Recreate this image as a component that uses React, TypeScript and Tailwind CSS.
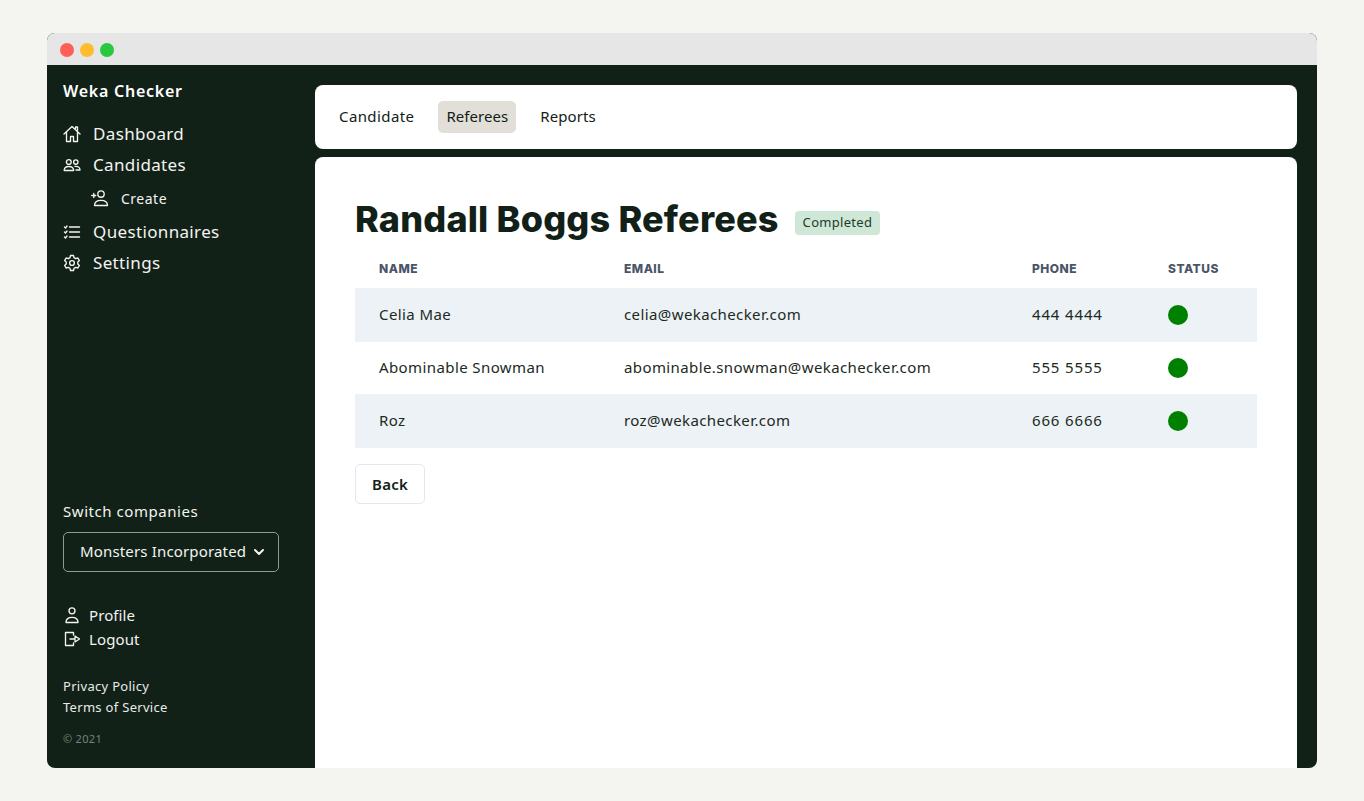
import React from "react";

const body = { fontFamily: '"Noto Sans", sans-serif' };

const Ico = ({ children, s = 18 }: { children: React.ReactNode; s?: number }) => (
  <svg width={s} height={s} viewBox="0 0 18 18" fill="none" stroke="currentColor" strokeWidth={1.35} strokeLinecap="round" strokeLinejoin="round" className="shrink-0">
    {children}
  </svg>
);

const Home = () => (
  <Ico><path d="M1 9 9 1.500 17 9M3.500 7v9.500h4v-5h3v5h4V7M12.500 3.500V2h2v3.500" /></Ico>
);
const Users = () => (
  <Ico><circle cx="5.800" cy="6" r="2.400" /><circle cx="12.800" cy="6" r="2.200" /><path d="M1.200 14.500c0-3 2-4 4.600-4s4.800 1 4.800 4zM12 10.400c2.800-.3 5 .8 5 3.600h-4" /></Ico>
);
const UserPlus = () => (
  <Ico><circle cx="10" cy="5" r="3.200" /><path d="M3.500 16.500c0-3.800 2.600-5.200 6.500-5.200s6.500 1.400 6.500 5.200zM.8 6.500h4M2.800 4.500v4" /></Ico>
);
const ListCheck = () => (
  <Ico><path d="M6.500 4h10M6.500 9h10M6.500 14h10M1.500 4l1 1 1.500-2M1.500 9l1 1 1.500-2M1.500 14l1 1 1.500-2" /></Ico>
);
const Gear = () => (
  <Ico><circle cx="9" cy="9" r="2.400" /><path d="M7.500 1.500h3l.5 2.200 1.700 1 2.200-.7 1.500 2.600-1.600 1.500v1.800l1.600 1.500-1.500 2.600-2.200-.7-1.700 1-.5 2.200h-3l-.5-2.200-1.700-1-2.200.7-1.500-2.600 1.600-1.500V8.100L1.600 6.600 3.100 4l2.200.7 1.700-1z" /></Ico>
);
const Person = () => (
  <Ico s={18}><circle cx="9" cy="4.800" r="3" /><path d="M3 16.500c0-3.800 2.400-5.200 6-5.200s6 1.400 6 5.200z" /></Ico>
);
const Logout = () => (
  <Ico s={18}><path d="M10.500 5V2.500H2.500v13h8V13M7 9h5V6l4.500 3-4.500 3V9" /></Ico>
);

const Nav = ({ icon, label }: { icon: React.ReactNode; label: string }) => (
  <div className="flex items-center gap-[12px] h-[31px] text-[17px] tracking-[0.35px] text-[#f3f4f0]">
    {icon}
    <span>{label}</span>
  </div>
);

const rows = [
  ["Celia Mae", "celia@wekachecker.com", "444 4444"],
  ["Abominable Snowman", "abominable.snowman@wekachecker.com", "555 5555"],
  ["Roz", "roz@wekachecker.com", "666 6666"],
];

export default function App() {
  return (
    <div className="w-[1364px] h-[801px] bg-[#f4f5f0] pt-[33px] pl-[47px] overflow-hidden" style={body}>
      <div className="w-[1270px] h-[735px] rounded-[8px] overflow-hidden flex flex-col bg-[#122118]">
        <div className="h-[32px] bg-[#e6e6e6] flex items-center gap-[6px] pl-[13px] pt-[2px] shrink-0">
          <span className="w-[14px] h-[14px] rounded-full bg-[#ff5f57]" />
          <span className="w-[14px] h-[14px] rounded-full bg-[#febc2e]" />
          <span className="w-[14px] h-[14px] rounded-full bg-[#28c840]" />
        </div>
        <div className="flex flex-1 min-h-0">
          <aside className="w-[268px] shrink-0 pl-[16px] pr-[36px] pt-[15px] pb-[21px] flex flex-col text-white">
            <div className="text-[16px] font-semibold tracking-[0.75px] leading-[22px] mb-[16px]">Weka Checker</div>
            <Nav icon={<Home />} label="Dashboard" />
            <Nav icon={<Users />} label="Candidates" />
            <div className="flex items-center gap-[12px] h-[36px] pl-[28px] text-[14px] tracking-[0.5px] text-[#f3f4f0]">
              <UserPlus />
              <span>Create</span>
            </div>
            <Nav icon={<ListCheck />} label="Questionnaires" />
            <Nav icon={<Gear />} label="Settings" />
            <div className="mt-auto text-[15px] tracking-[0.55px] leading-[20px] text-[#f3f4f0]">Switch companies</div>
            <div className="mt-[11px] w-[216px] h-[40px] border border-[#8f9a94] rounded-[5px] flex items-center pl-[16px] pb-[1px] gap-[7px] text-[15px] tracking-[0.16px] text-[#f3f4f0]">
              <span className="whitespace-nowrap">Monsters Incorporated</span>
              <svg width="12" height="12" viewBox="0 0 12 12" fill="none" stroke="currentColor" strokeWidth={2} strokeLinecap="round" strokeLinejoin="round"><path d="M2 4l4 4 4-4" /></svg>
            </div>
            <div className="mt-[31px] flex items-center gap-[8px] h-[24px] text-[15px] tracking-[0.1px] text-[#f3f4f0]"><Person /><span>Profile</span></div>
            <div className="flex items-center gap-[8px] h-[24px] text-[15px] tracking-[0.1px] text-[#f3f4f0]"><Logout /><span>Logout</span></div>
            <div className="mt-[25px] text-[13px] leading-[21px] tracking-[0.3px] text-[#e9ebe7]">Privacy Policy</div>
            <div className="text-[13px] leading-[21px] tracking-[0.3px] text-[#e9ebe7]">Terms of Service</div>
            <div className="mt-[13px] text-[11px] leading-[16px] tracking-[0.3px] text-[#76827c]">© 2021</div>
          </aside>
          <main className="flex-1 min-w-0 pt-[20px] pr-[20px] flex flex-col gap-[8px]">
            <div className="h-[64px] bg-white rounded-[8px] flex items-center pl-[16px] gap-[16px] text-[15px] text-[#122118] shrink-0">
              <span className="px-[8px] pb-[2px] tracking-[0.4px]">Candidate</span>
              <span className="px-[8px] h-[32px] pb-[2px] flex items-center rounded-[5px] bg-[#e1dfd7] tracking-[0.05px]">Referees</span>
              <span className="px-[8px] pb-[2px] tracking-[0.1px]">Reports</span>
            </div>
            <div className="flex-1 bg-white rounded-t-[8px] px-[40px] pt-[40px]">
              <div className="flex items-center gap-[16px] h-[44px]">
                <h1 className="text-[36px] font-extrabold tracking-[0.18px] leading-[44px] text-[#122118] whitespace-nowrap" style={{ fontFamily: "Inter, sans-serif" }}>Randall Boggs Referees</h1>
                <span className="h-[24px] mt-[7px] px-[8px] rounded-[4px] bg-[#cfe7d7] text-[13px] tracking-[0.3px] flex items-center text-[#1d3a2a]">Completed</span>
              </div>
              <div className="grid grid-cols-[245px_408px_136px_113px] h-[39px] items-center pl-[24px] text-[12px] font-extrabold tracking-[0.5px] text-[#4a5568] mt-[8px]" style={{ fontFamily: "Inter, sans-serif" }}>
                <span>NAME</span><span>EMAIL</span><span>PHONE</span><span>STATUS</span>
              </div>
              <div className="w-[902px]">
                {rows.map((r, i) => (
                  <div key={r[0]} className={`grid grid-cols-[245px_408px_136px_89px] items-center pl-[24px] text-[15px] tracking-[0.4px] text-[#1b2a22] ${i % 2 === 0 ? "h-[54px] bg-[#edf2f7]" : "h-[52px]"}`}>
                    <span className="pb-[2px]">{r[0]}</span><span className="pb-[2px]">{r[1]}</span><span className="pb-[2px] tracking-[0.85px]">{r[2]}</span>
                    <span className="w-[20px] h-[20px] rounded-full bg-[#008000]" />
                  </div>
                ))}
              </div>
              <button className="mt-[16px] w-[70px] h-[40px] border border-[#e2e8f0] rounded-[5px] text-[15px] font-semibold tracking-[0.2px] text-[#122118]">Back</button>
            </div>
          </main>
        </div>
      </div>
    </div>
  );
}
